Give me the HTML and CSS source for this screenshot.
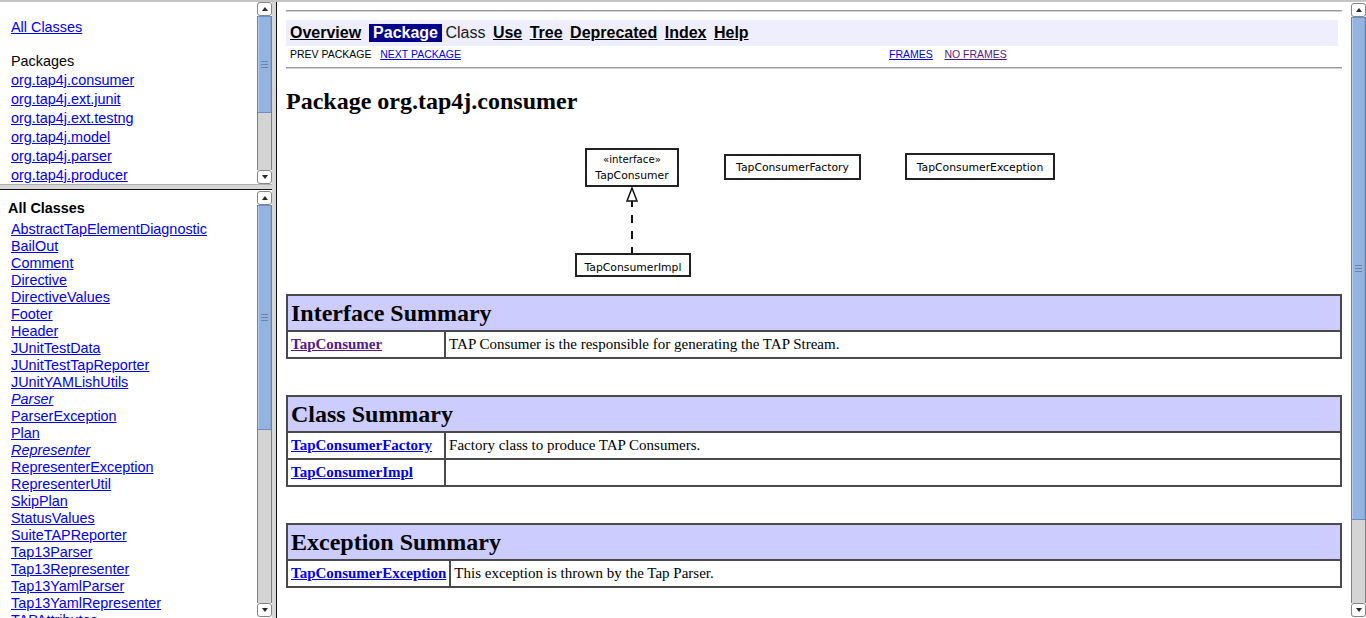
FILE: index.html
```html
<!DOCTYPE html>
<html>
<head>
<meta charset="utf-8">
<title>org.tap4j.consumer</title>
<link rel="stylesheet" href="styles.css">
</head>
<body>
<div class="screen">
  <div class="leftcol">
    <div class="frame frame-pkgs">
      <div class="frame-body pkgs">
        <div class="item first"><a href="#">All Classes</a></div>
        <div class="pkg-head">Packages</div>
        <div class="item"><a href="#">org.tap4j.consumer</a></div>
        <div class="item"><a href="#">org.tap4j.ext.junit</a></div>
        <div class="item"><a href="#">org.tap4j.ext.testng</a></div>
        <div class="item"><a href="#">org.tap4j.model</a></div>
        <div class="item"><a href="#">org.tap4j.parser</a></div>
        <div class="item"><a href="#">org.tap4j.producer</a></div>
      </div>
      <div class="sb sb-pkgs">
        <div class="sb-btn"><span class="tri-up"></span></div>
        <div class="sb-track"><div class="sb-thumb"><span class="grip"></span></div></div>
        <div class="sb-btn"><span class="tri-down"></span></div>
      </div>
    </div>
    <div class="hsep"></div>
    <div class="frame frame-classes">
      <div class="frame-body classes">
        <div class="cls-head">All Classes</div>
        <div class="citem"><a href="#">AbstractTapElementDiagnostic</a></div>
        <div class="citem"><a href="#">BailOut</a></div>
        <div class="citem"><a href="#">Comment</a></div>
        <div class="citem"><a href="#">Directive</a></div>
        <div class="citem"><a href="#">DirectiveValues</a></div>
        <div class="citem"><a href="#">Footer</a></div>
        <div class="citem"><a href="#">Header</a></div>
        <div class="citem"><a href="#">JUnitTestData</a></div>
        <div class="citem"><a href="#">JUnitTestTapReporter</a></div>
        <div class="citem"><a href="#">JUnitYAMLishUtils</a></div>
        <div class="citem"><a href="#"><i>Parser</i></a></div>
        <div class="citem"><a href="#">ParserException</a></div>
        <div class="citem"><a href="#">Plan</a></div>
        <div class="citem"><a href="#"><i>Representer</i></a></div>
        <div class="citem"><a href="#">RepresenterException</a></div>
        <div class="citem"><a href="#">RepresenterUtil</a></div>
        <div class="citem"><a href="#">SkipPlan</a></div>
        <div class="citem"><a href="#">StatusValues</a></div>
        <div class="citem"><a href="#">SuiteTAPReporter</a></div>
        <div class="citem"><a href="#">Tap13Parser</a></div>
        <div class="citem"><a href="#">Tap13Representer</a></div>
        <div class="citem"><a href="#">Tap13YamlParser</a></div>
        <div class="citem"><a href="#">Tap13YamlRepresenter</a></div>
        <div class="citem"><a href="#">TAPAttributes</a></div>
      </div>
      <div class="sb sb-classes">
        <div class="sb-btn"><span class="tri-up"></span></div>
        <div class="sb-track"><div class="sb-thumb"><span class="grip"></span></div></div>
        <div class="sb-btn"><span class="tri-down"></span></div>
      </div>
    </div>
  </div>
  <div class="vsep"></div>
  <div class="frame frame-main">
    <div class="frame-body main">
      <div class="hr hr-top"></div>
      <div class="navbar">
        <div class="navrow">
          <span class="navcell"><a class="navlink" href="#">Overview</a>&nbsp;</span>
          <span class="navcell rev">&nbsp;<b>Package</b>&nbsp;</span>
          <span class="navcell plain">Class&nbsp;</span>
          <span class="navcell"><a class="navlink" href="#">Use</a>&nbsp;</span>
          <span class="navcell"><a class="navlink" href="#">Tree</a>&nbsp;</span>
          <span class="navcell"><a class="navlink" href="#">Deprecated</a>&nbsp;</span>
          <span class="navcell"><a class="navlink" href="#">Index</a>&nbsp;</span>
          <span class="navcell"><a class="navlink" href="#">Help</a>&nbsp;</span>
        </div>
      </div>
      <div class="subnav">
        <div class="subnav-left">&nbsp;PREV PACKAGE&nbsp; &nbsp;<a href="#">NEXT PACKAGE</a></div>
        <div class="subnav-right"><a href="#">FRAMES</a> &nbsp; &nbsp;<a class="visited" href="#">NO FRAMES</a></div>
      </div>
      <div class="hr hr-bottom"></div>
      <h2 class="title">Package org.tap4j.consumer</h2>
      <div class="diagram">
        <svg class="uml" width="490" height="140" viewBox="0 0 490 140">
          <g fill="#fff" stroke="#222" stroke-width="2">
            <rect x="17" y="6" width="92" height="37"/>
            <rect x="156" y="12" width="135" height="24"/>
            <rect x="337" y="11" width="148" height="25"/>
            <rect x="7" y="111" width="114" height="22"/>
          </g>
          <line x1="63" y1="58" x2="63" y2="110" stroke="#111" stroke-width="2" stroke-dasharray="8 8" stroke-dashoffset="2"/>
          <polygon points="63,45 58,58 68,58" fill="#fff" stroke="#111" stroke-width="1.5"/>
          <g font-family="DejaVu Sans, sans-serif" font-size="10.8" text-anchor="middle" fill="#000">
            <text x="63" y="20" font-size="10.2">«interface»</text>
            <text x="63" y="36">TapConsumer</text>
            <text x="223.5" y="27.5">TapConsumerFactory</text>
            <text x="411" y="27.5">TapConsumerException</text>
            <text x="64" y="127.5">TapConsumerImpl</text>
          </g>
        </svg>
      </div>
      <table class="summary">
        <tr><th colspan="2">Interface Summary</th></tr>
        <tr><td class="name"><a class="visited" href="#"><b>TapConsumer</b></a></td><td>TAP Consumer is the responsible for generating the TAP Stream.</td></tr>
      </table>
      <table class="summary">
        <tr><th colspan="2">Class Summary</th></tr>
        <tr><td class="name"><a href="#"><b>TapConsumerFactory</b></a></td><td>Factory class to produce TAP Consumers.</td></tr>
        <tr><td class="name"><a href="#"><b>TapConsumerImpl</b></a></td><td>&nbsp;</td></tr>
      </table>
      <table class="summary">
        <tr><th colspan="2">Exception Summary</th></tr>
        <tr><td class="name"><a href="#"><b>TapConsumerException</b></a></td><td>This exception is thrown by the Tap Parser.</td></tr>
      </table>
    </div>
    <div class="sb sb-main">
      <div class="sb-btn"><span class="tri-up"></span></div>
      <div class="sb-track"><div class="sb-thumb"><span class="grip"></span></div></div>
      <div class="sb-btn"><span class="tri-down"></span></div>
    </div>
  </div>
</div>
</body>
</html>
```

FILE: styles.css
```css
* { box-sizing: border-box; }
html, body { margin: 0; padding: 0; background: #fff; }
body { font-family: "Liberation Sans", Arial, sans-serif; color: #000; }
a { color: #0000ee; }
a.visited { color: #551a8b; }

.screen {
  width: 1366px;
  height: 618px;
  display: flex;
  border-top: 2px solid #c4c4c4;
  overflow: hidden;
}
.leftcol { width: 272px; flex: none; display: flex; flex-direction: column; }
.frame { display: flex; overflow: hidden; }
.frame-body { flex: 1; min-width: 0; overflow: hidden; }
.frame-pkgs { height: 182px; flex: none; }
.hsep { height: 6px; flex: none; background: #d6d6d6; border-top: 1px solid #b0b0b0; border-bottom: 1px solid #111; }
.frame-classes { flex: 1; min-height: 0; }
.vsep { width: 4px; flex: none; background: #d6d6d6; }
.frame-main { flex: 1; border-left: 1px solid #111; }

/* package list frame */
.pkgs { padding: 16px 0 0 11px; font-size: 14.4px; line-height: 19px; white-space: nowrap; }
.pkg-head { margin-top: 15px; }

/* class list frame */
.classes { padding: 9px 0 0 8px; font-size: 14.4px; white-space: nowrap; }
.cls-head { font-weight: bold; line-height: 18px; margin-bottom: 4px; }
.citem { line-height: 17px; padding-left: 3px; }

/* scrollbars */
.sb { width: 15px; flex: none; display: flex; flex-direction: column; background: #fff; }
.sb-classes, .sb-main { padding: 1px 0; }
.sb-btn {
  height: 14px; flex: none; background: #fff;
  border: 1px solid #858585; border-radius: 3px;
  display: flex; align-items: center; justify-content: center;
}
.tri-up { width: 0; height: 0; border-left: 3.5px solid transparent; border-right: 3.5px solid transparent; border-bottom: 4px solid #2a2a2a; }
.tri-down { width: 0; height: 0; border-left: 3.5px solid transparent; border-right: 3.5px solid transparent; border-top: 4px solid #2a2a2a; }
.sb-track { flex: 1; min-height: 0; background: #d4d4d4; border-left: 1px solid #7f7f7f; border-right: 1px solid #7f7f7f; }
.sb-thumb {
  background: #93b3e1;
  border-top: 1px solid #6e8ec4; border-bottom: 1px solid #6e8ec4;
  box-shadow: inset 1px 0 0 #b6cbec, inset -1px 0 0 #86a6d6;
  display: flex; align-items: center; justify-content: center;
}
.sb-pkgs .sb-thumb { height: 97px; }
.sb-classes .sb-thumb { height: 225px; }
.sb-main .sb-thumb { height: 503px; }
.grip {
  width: 7px; height: 7px;
  background: linear-gradient(#6f83a6 0 1px, transparent 1px 3px, #6f83a6 3px 4px, transparent 4px 6px, #6f83a6 6px 7px);
}

/* main frame */
.main { padding: 8px 9px 0 9px; font-family: "Liberation Serif", "Times New Roman", serif; }
.hr { height: 2px; border-top: 1px solid #9c9c9c; border-bottom: 1px solid #d2d2d2; }
.navbar {
  margin-top: 8px;
  width: calc(100% - 4px);
  background: #eeeeff;
  padding: 1px;
  font-family: "Liberation Sans", Arial, sans-serif;
  font-size: 16px;
}
.navrow { display: flex; gap: 3px; padding: 3px; }
.navcell { line-height: 18px; white-space: nowrap; }
.navlink { color: #000; font-weight: bold; }
.navcell.rev { background: #00008b; color: #fff; }
.navcell.plain { color: #1a1a1a; }
.subnav {
  display: flex;
  font-family: "Liberation Sans", Arial, sans-serif;
  font-size: 10.5px;
  line-height: 14px;
  height: 16px;
  white-space: nowrap;
}
.subnav-left { width: 602px; padding: 1px 1px 0; }
.subnav-right { padding: 1px 1px 0; }
.hr-bottom { margin-top: 5px; }
.title { margin: 19px 0 0; font-size: 24px; line-height: 27px; font-weight: bold; }
.diagram { margin-top: 28px; height: 140px; display: flex; justify-content: center; }
.uml { display: block; }

table.summary {
  width: 100%;
  border-collapse: separate;
  border-spacing: 0;
  border: 1px solid #4a4a4a;
  margin-top: 36px;
}
.diagram + table.summary { margin-top: 11px; }
.summary th {
  background: #ccccff;
  text-align: left;
  font-size: 24px;
  line-height: 28px;
  font-weight: bold;
  padding: 3px;
  border: 1px solid #4a4a4a;
}
.summary td {
  font-size: 15px;
  line-height: 19px;
  padding: 3px;
  border: 1px solid #4a4a4a;
  vertical-align: top;
  white-space: nowrap;
}
.summary td.name { width: 15%; }
```
